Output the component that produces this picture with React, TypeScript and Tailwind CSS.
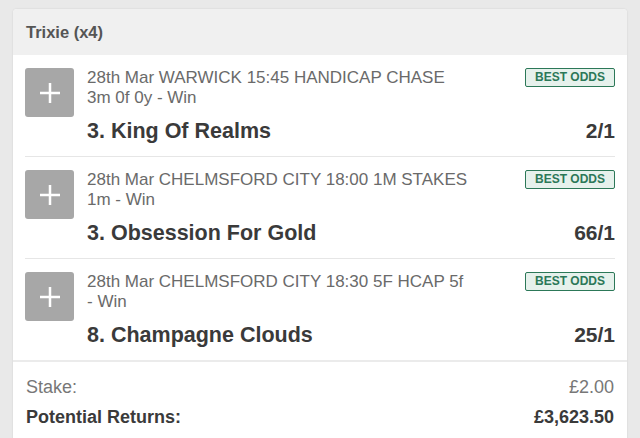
import React from 'react';

type Leg = {
  desc: string;
  name: string;
  odds: string;
};

const legs: Leg[] = [
  { desc: '28th Mar WARWICK 15:45 HANDICAP CHASE 3m 0f 0y - Win', name: '3. King Of Realms', odds: '2/1' },
  { desc: '28th Mar CHELMSFORD CITY 18:00 1M STAKES 1m - Win', name: '3. Obsession For Gold', odds: '66/1' },
  { desc: '28th Mar CHELMSFORD CITY 18:30 5F HCAP 5f - Win', name: '8. Champagne Clouds', odds: '25/1' },
];

function PlusBox() {
  return (
    <div className="w-[49px] h-[49px] shrink-0 rounded-[3px] bg-[#a7a7a7] flex items-center justify-center">
      <svg width="22" height="22" viewBox="0 0 22 22">
        <rect x="9.75" y="1" width="2.5" height="20" fill="#fff" />
        <rect x="1" y="9.75" width="20" height="2.5" fill="#fff" />
      </svg>
    </div>
  );
}

function LegRow({ leg, last }: { leg: Leg; last: boolean }) {
  return (
    <div className="px-3">
      <div className={`flex gap-[13px] pt-[13px] pb-[12px] ${last ? '' : 'border-b border-[#e6e6e6]'}`}>
        <PlusBox />
        <div className="flex-1 min-w-0">
          <div className="flex justify-between items-start">
            <div className="w-[384px] text-[17px] leading-[20px] text-[#6a6a6a]">{leg.desc}</div>
            <div className="h-[19px] px-[9px] rounded-[2px] border border-[#2c7858] bg-[#e6f1ec] text-[12px] leading-[17px] font-bold text-[#2c7858]">
              BEST ODDS
            </div>
          </div>
          <div className="mt-[10px] flex justify-between items-center text-[21.5px] leading-[26px] font-bold text-[#3a3a3a]">
            <span>{leg.name}</span>
            <span className="text-[21px]">{leg.odds}</span>
          </div>
        </div>
      </div>
    </div>
  );
}

export default function App() {
  return (
    <div
      className="min-h-[438px] bg-[#e9e9e9] pt-[9px] px-[13px]"
      style={{ fontFamily: '"Liberation Sans", Arial, sans-serif' }}
    >
      <div className="rounded-t-[4px] bg-white overflow-hidden shadow-[0_0_2px_rgba(0,0,0,0.12)]">
        {/* Header */}
        <div className="h-[46px] bg-[#f0f0f0] px-[13px] flex items-center text-[16.5px] font-bold text-[#555]">
          Trixie (x4)
        </div>

        {legs.map((leg, i) => (
          <LegRow key={i} leg={leg} last={i === legs.length - 1} />
        ))}

        {/* Totals */}
        <div className="border-t-2 border-[#ebebeb] px-[13px] pt-[13px] pb-4 text-[18px] leading-[24px]">
          <div className="flex justify-between text-[#777]">
            <span>Stake:</span>
            <span>£2.00</span>
          </div>
          <div className="mt-[6px] flex justify-between font-bold text-[#3a3a3a]">
            <span>Potential Returns:</span>
            <span>£3,623.50</span>
          </div>
        </div>
      </div>
    </div>
  );
}
